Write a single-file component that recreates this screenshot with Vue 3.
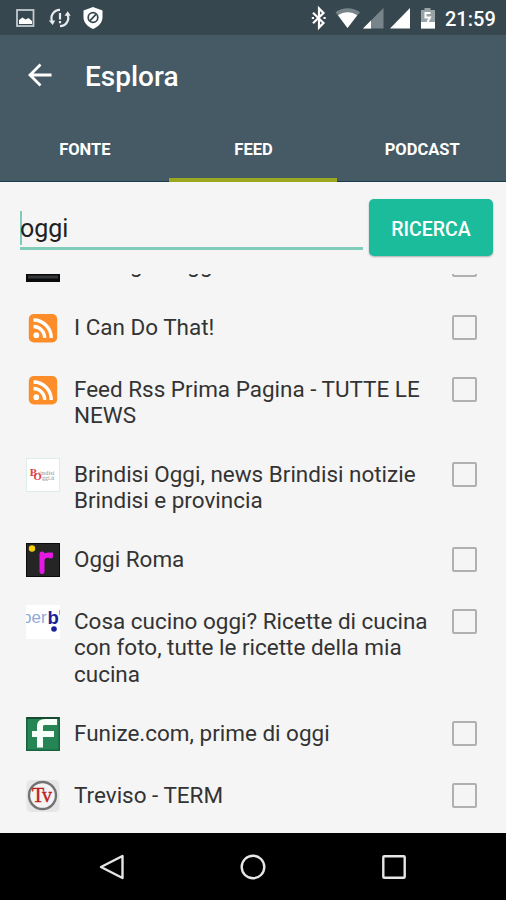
<script setup>
import { ref } from 'vue'

const tabs = ['FONTE', 'FEED', 'PODCAST']
const activeTab = ref('FEED')
const query = ref('oggi')

const feeds = ref([
  { id: 1, icon: 'dark', lines: ['Editing di Oggi'], checked: false },
  { id: 2, icon: 'rss', lines: ['I Can Do That!'], checked: false },
  { id: 3, icon: 'rss', lines: ['Feed Rss Prima Pagina - TUTTE LE', 'NEWS'], checked: false },
  { id: 4, icon: 'brindisi', lines: ['Brindisi Oggi, news Brindisi notizie', 'Brindisi e provincia'], checked: false },
  { id: 5, icon: 'roma', lines: ['Oggi Roma'], checked: false },
  { id: 6, icon: 'cucina', lines: ['Cosa cucino oggi? Ricette di cucina', 'con foto, tutte le ricette della mia', 'cucina'], checked: false },
  { id: 7, icon: 'funize', lines: ['Funize.com, prime di oggi'], checked: false },
  { id: 8, icon: 'treviso', lines: ['Treviso - TERM'], checked: false }
])

const toggle = (feed) => {
  feed.checked = !feed.checked
}
</script>

<template>
  <div class="screen">
    <header class="status">
      <svg class="status-left" width="90" height="36" viewBox="0 0 90 36">
        <rect x="17" y="10" width="16.500" height="16" fill="none" stroke="#c3cacd" stroke-width="1.800" />
        <path d="M19 24v-4l3.500-2.500 3 2 3-1.500 3.500 3V24z" fill="#fff" />
        <g fill="none" stroke="#e8ecee" stroke-width="2.200">
          <path d="M60 9.800A8.300 8.300 0 0 0 52 21" />
          <path d="M60 26.200A8.300 8.300 0 0 0 67.500 14.500" />
          <path d="M60 13v6.500M60 21v2.200" />
        </g>
        <path d="M48.800 20.500h6.400l-2.500 4.500zM64.500 15.800h6.200l-3-4.600z" fill="#e8ecee" />
      </svg>
      <svg class="shield" width="20" height="24" viewBox="0 0 20 24">
        <path d="M10 1l9.500 3.600v6.600c0 5-3.600 9.300-9.500 11.800C4.100 20.500.5 16.200.5 11.200V4.600z" fill="#fff" />
        <circle cx="10" cy="11.500" r="4.800" fill="none" stroke="#37474f" stroke-width="1.700" />
        <path d="M13.200 8.200l-6.400 6.600" stroke="#37474f" stroke-width="1.700" />
      </svg>
      <svg class="status-right" width="126" height="36" viewBox="0 0 126 36">
        <path d="M4 12.700l10.500 10.300-4.500 4.500V8.500l4.500 4.500L4 23.300" fill="none" stroke="#fff" stroke-width="2.200" />
        <path d="M2.800 18h2.200M14.500 18h2.200" stroke="#fff" stroke-width="2.200" />
        <path d="M26.500 12.200c7-5.400 17-5.400 24.500 0L38.500 28z" fill="#77858b" />
        <path d="M29 15.300c5.600-4 13.400-4 19.200 0L38.500 28z" fill="#fff" />
        <path d="M54 28.500L74.500 8v20.500z" fill="#77858b" />
        <path d="M54 28.500l8-8v8z" fill="#fff" />
        <path d="M81 28.500L101 8v20.500z" fill="#fff" />
        <path d="M112 10h3.500V8h6v2h4.500v18.500h-14z" fill="#98a3a8" />
        <path d="M112 22h14v6.500h-14z" fill="#fff" />
        <path d="M121.500 13h-5v4.500h4.500l-2.500 4.500" fill="none" stroke="#fff" stroke-width="2" />
      </svg>
      <span class="clock">21:59</span>
    </header>

    <div class="toolbar">
      <svg class="back" width="26" height="24" viewBox="0 0 26 24">
        <path d="M13.500 1.500L3 12l10.500 10.500M3 12h21.500" fill="none" stroke="#fff" stroke-width="2.800" />
      </svg>
      <h1>Esplora</h1>
    </div>

    <nav class="tabs">
      <button
        v-for="tab in tabs"
        :key="tab"
        :class="['tab', { active: tab === activeTab }]"
        @click="activeTab = tab"
      >
        {{ tab }}
      </button>
    </nav>

    <div class="search">
      <div class="field">
        <span class="caret"></span>
        <span class="query">{{ query }}</span>
      </div>
      <button class="search-button">RICERCA</button>
    </div>

    <main class="list">
      <ul>
        <li v-for="feed in feeds" :key="feed.id" class="row">
          <svg class="icon" width="34" height="34" viewBox="0 0 34 34">
            <template v-if="feed.icon === 'dark'">
              <rect width="34" height="34" fill="#080a0c" />
              <rect x="2" y="27.500" width="30" height="3" fill="#34383b" />
            </template>
            <template v-else-if="feed.icon === 'rss'">
              <rect x="2.800" y="3" width="28.400" height="28.400" rx="5" fill="#fd8d29" />
              <circle cx="10.300" cy="24.200" r="2.900" fill="#fff" />
              <g fill="none" stroke="#fff" stroke-width="3.400">
                <path d="M7.500 15.500A11.200 11.200 0 0 1 18.700 26.900" />
                <path d="M7.500 9A17.700 17.700 0 0 1 25.200 26.900" />
              </g>
            </template>
            <template v-else-if="feed.icon === 'brindisi'">
              <rect x=".5" y=".5" width="33" height="33" fill="#fff" stroke="#dceeea" />
              <text x="3.800" y="17.500" class="serif" font-size="11" font-weight="bold" fill="#d9433f">B</text>
              <text x="7.500" y="22.300" class="serif" font-size="10.500" font-weight="bold" fill="#d9433f">O</text>
              <text x="12" y="17" class="serif" font-size="6" textLength="16.500" fill="#8c8c8c">rindisi</text>
              <text x="16" y="22" class="serif" font-size="6" textLength="12.500" fill="#8c8c8c">ggi.it</text>
            </template>
            <template v-else-if="feed.icon === 'roma'">
              <rect x=".5" y=".5" width="33" height="33" fill="#252525" stroke="#0c0c0c" />
              <circle cx="6" cy="5.500" r="3.200" fill="#f6cf0b" />
              <path d="M16 11v17.500M16 16.500c1-3.500 4-5 8.500-4.500v1" fill="none" stroke="#e619e4" stroke-width="5" stroke-linecap="round" />
            </template>
            <template v-else-if="feed.icon === 'cucina'">
              <rect width="34" height="34" fill="#fff" />
              <text x="-4" y="18" class="sans" font-size="17" fill="#8fa9d8">per</text>
              <text x="21.500" y="18.500" class="sans" font-size="18.500" font-weight="bold" fill="#1b219a">b</text>
              <path d="M33.500 5v5" stroke="#8fa9d8" />
              <circle cx="28" cy="24" r="2.800" fill="#1b219a" />
            </template>
            <template v-else-if="feed.icon === 'funize'">
              <rect x=".75" y=".75" width="32.500" height="32.500" fill="#258554" stroke="#17633d" stroke-width="1.500" />
              <path d="M1 1h32" stroke="#174b31" stroke-width="2" />
              <path d="M14 30.500V9q0-4 5-4h12M6 17h22" fill="none" stroke="#f6fff8" stroke-width="6" />
            </template>
            <template v-else>
              <rect x=".5" y="1" width="33" height="32" rx="5" fill="#e6e6e6" />
              <circle cx="16.500" cy="16.500" r="13.500" fill="#f4f4f4" stroke="#737373" stroke-width="2.400" />
              <text x="6" y="23" class="serif" font-size="20" fill="#bb211c" stroke="#bb211c" stroke-width=".4" textLength="20">Tv</text>
            </template>
          </svg>
          <div class="name">
            <div v-for="line in feed.lines" :key="line">{{ line }}</div>
          </div>
          <span :class="['checkbox', { checked: feed.checked }]" @click="toggle(feed)"></span>
        </li>
      </ul>
    </main>

    <footer class="navbar">
      <svg width="28" height="28" viewBox="0 0 28 28">
        <path d="M24.500 3v22L3 14z" />
      </svg>
      <svg width="28" height="28" viewBox="0 0 28 28">
        <circle cx="14" cy="14" r="11.300" />
      </svg>
      <svg width="28" height="28" viewBox="0 0 28 28">
        <rect x="3.300" y="3.300" width="21.400" height="21.400" rx="1" />
      </svg>
    </footer>
  </div>
</template>

<style>
body {
  margin: 0;
}
</style>

<style scoped>
.screen {
  display: flex;
  flex-direction: column;
  width: 506px;
  height: 900px;
  overflow: hidden;
  background-color: #f5f5f5;
  font-family: Roboto, "Liberation Sans", sans-serif;
}

.status {
  display: flex;
  align-items: center;
  height: 35px;
  background-color: #37474f;
}

.status svg {
  flex: none;
}

.shield {
  margin-left: -7px;
}

.status-right {
  margin-left: 206px;
}

.clock {
  margin-left: 10px;
  padding-top: 3px;
  color: #fff;
  font-size: 20px;
  font-weight: 500;
  line-height: 35px;
}

.toolbar {
  display: flex;
  align-items: center;
  height: 82px;
  padding-left: 27px;
  background-color: #455a64;
}

.back {
  margin-bottom: 2px;
}

.toolbar h1 {
  margin: 1px 0 0 32px;
  color: #fff;
  font-size: 28px;
  font-weight: 500;
}

.tabs {
  display: flex;
  height: 64px;
  border-bottom: 1px solid #173c4c;
  background-color: #455a64;
}

.tab {
  flex: 1;
  height: 65px;
  padding: 4px 0 0 1px;
  border: 0;
  border-bottom: 4px solid transparent;
  background: none;
  color: #fff;
  font-family: inherit;
  font-size: 16.500px;
  font-weight: 700;
}

.tab.active {
  border-bottom-color: #9aa81f;
}

.search {
  display: flex;
  height: 92px;
  padding-left: 20px;
}

.field {
  display: flex;
  align-items: center;
  width: 343px;
  height: 38px;
  margin-top: 27px;
  border-bottom: 3px solid #80cbb9;
}

.caret {
  width: 2px;
  height: 34px;
  margin-right: -2px;
  background-color: #80cbb9;
}

.query {
  margin-top: 1px;
  color: #212121;
  font-size: 25px;
}

.search-button {
  width: 124px;
  height: 57px;
  margin: 17px 0 0 6px;
  padding: 4px 0 0;
  border: 0;
  border-radius: 5px;
  background-color: #1abc9c;
  box-shadow: 0 1px 2px rgba(0, 0, 0, 0.3);
  color: #fff;
  font-family: inherit;
  font-size: 19.500px;
  font-weight: 500;
}

.list {
  flex: 1;
  min-height: 0;
  overflow: hidden;
}

/* scrolled part way into the first result */
.list ul {
  margin: -38.500px 0 0;
  padding: 0;
  list-style: none;
}

.row {
  display: flex;
  align-items: flex-start;
  box-sizing: border-box;
  min-height: 62px;
  padding: 16px 29px 16px 26px;
}

.row:first-child {
  padding-top: 15px;
}

.icon {
  flex: none;
  margin: -3px 0 -1px;
}

.icon .serif {
  font-family: "Liberation Serif", serif;
}

.icon .sans {
  font-family: "Liberation Sans", sans-serif;
}

.name {
  flex: 1;
  margin-left: 14px;
  color: #333;
  font-size: 22.480px;
  line-height: 26.600px;
  white-space: nowrap;
}

.checkbox {
  flex: none;
  box-sizing: border-box;
  width: 25px;
  height: 25px;
  margin-top: 1px;
  border: 2px solid #b0b0b0;
  border-radius: 2px;
}

.checkbox.checked {
  background-color: #1abc9c;
}

.navbar {
  display: flex;
  justify-content: center;
  align-items: center;
  gap: 113px;
  height: 67px;
  background-color: #000;
}

.navbar svg {
  fill: none;
  stroke: #e6e6e6;
  stroke-width: 2.400;
  stroke-linejoin: round;
}
</style>
